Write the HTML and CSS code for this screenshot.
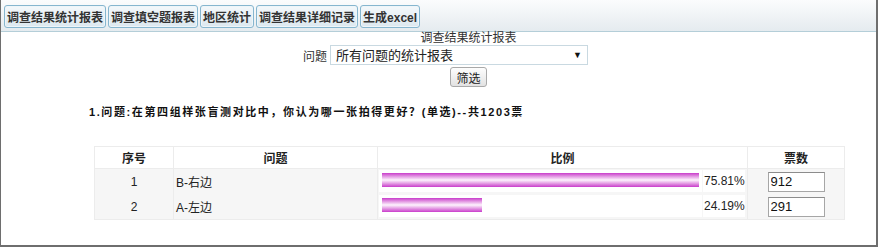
FILE: index.html
```html
<!DOCTYPE html>
<html lang="zh">
<head>
	<meta charset="UTF-8">
	<title>调查结果统计报表</title>
	<link rel="stylesheet" href="styles.css">
</head>
<body>
	<div id="page">
		<!-- Tabs -->
		<div id="tabbar">
			<button class="tab">调查结果统计报表</button>
			<button class="tab">调查填空题报表</button>
			<button class="tab">地区统计</button>
			<button class="tab">调查结果详细记录</button>
			<button class="tab">生成excel</button>
		</div>

		<!-- Filter -->
		<div id="filter">
			<div class="title">调查结果统计报表</div>
			<div class="row">
				<span class="label">问题</span>
				<span class="selectWrap">
					<select name="question">
						<option>所有问题的统计报表</option>
					</select>
				</span>
			</div>
			<button class="btn">筛选</button>
		</div>

		<!-- Result -->
		<p class="question">1.问题:在第四组样张盲测对比中，你认为哪一张拍得更好？(单选)--共1203票</p>

		<table id="result">
			<tr>
				<th class="colNo">序号</th>
				<th class="colName">问题</th>
				<th class="colRate">比例</th>
				<th class="colCount">票数</th>
			</tr>
			<tr>
				<td class="center">1</td>
				<td>B-右边</td>
				<td class="rateCell">
					<div class="rate">
						<div class="barBox"><div class="bar" style="width: 317px"></div></div>
						<div class="pct">75.81%</div>
					</div>
				</td>
				<td class="center"><input type="text" value="912"></td>
			</tr>
			<tr>
				<td class="center">2</td>
				<td>A-左边</td>
				<td class="rateCell">
					<div class="rate">
						<div class="barBox"><div class="bar" style="width: 100px"></div></div>
						<div class="pct">24.19%</div>
					</div>
				</td>
				<td class="center"><input type="text" value="291"></td>
			</tr>
		</table>
	</div>
</body>
</html>
```

FILE: styles.css
```css
body {
	margin: 0;
	background: #fff;
	font-family: "Liberation Sans", "Noto Sans CJK SC", sans-serif;
	font-size: 12px;
	color: #222;
}

#page {
	box-sizing: border-box;
	width: 878px;
	height: 247px;
	border: solid 2px #6e6e6e;
	border-top: none;
	border-left-width: 1px;
}

/* 上のタブ */
#tabbar {
	display: flex;
	gap: 2px;
	height: 32px;
	box-sizing: border-box;
	padding: 5px 0 0 3px;
	background: linear-gradient(#fbfcfd, #e5ebef);
	border-bottom: solid 1px #b4ced8;
}
button.tab {
	height: 23px;
	padding: 0 2px;
	font-family: "Liberation Sans", "Noto Sans CJK SC", sans-serif;
	font-size: 12px;
	font-weight: bold;
	color: #333;
	background: linear-gradient(#f4f8fb, #dce8ef);
	border: solid 1px #86b6cf;
	border-radius: 3px;
	box-shadow: inset 0 0 0 1px #eef5f9;
}

#filter {
	display: flex;
	flex-direction: column;
	align-items: center;
}
#filter .title {
	margin: 0 0 0 60px;
	line-height: 13px;
	color: #333;
}
#filter .row {
	display: flex;
	align-items: center;
	margin: 0 0 0 14px;
	gap: 3px;
}
#filter .label {
	color: #333;
}
.selectWrap {
	position: relative;
	display: block;
}
.selectWrap::after {
	content: "▼";
	position: absolute;
	right: 6px;
	top: 5px;
	font-size: 9px;
	color: #111;
	pointer-events: none;
}
select {
	-webkit-appearance: none;
	appearance: none;
	width: 258px;
	height: 20px;
	margin: 0;
	padding: 0 5px;
	font-family: "Liberation Sans", "Noto Sans CJK SC", sans-serif;
	font-size: 13px;
	color: #222;
	background: #fff;
	border: solid 1px #c9d9e1;
	border-radius: 0;
}
button.btn {
	margin: 2px 0 0 60px;
	width: 37px;
	height: 20px;
	padding: 0;
	font-family: "Liberation Sans", "Noto Sans CJK SC", sans-serif;
	font-size: 12px;
	color: #222;
	background: linear-gradient(#fdfdfd, #e2e2e2);
	border: solid 1px #a9a9a9;
	border-radius: 3px;
}

p.question {
	margin: 16px 0 0 88px;
	font-size: 11px;
	font-weight: bold;
	letter-spacing: 1.6px;
	color: #111;
}

/* 結果テーブル */
#result {
	margin: 27px 0 0 93px;
	width: 751px;
	border-collapse: collapse;
	border: solid 1px #ececec;
}
#result th {
	height: 21px;
	padding: 0;
	background: #fff;
	border: solid 1px #ececec;
	font-size: 12px;
	font-weight: bold;
	color: #222;
}
#result td {
	height: 25px;
	padding: 0 0 0 2px;
	background: #f6f6f6;
	border-left: solid 1px #ececec;
	font-size: 12px;
	color: #222;
}
#result td.center {
	text-align: center;
	padding: 0;
}
th.colNo { width: 78px; }
th.colName { width: 203px; }
th.colRate { width: 369px; }

td.rateCell {
	padding: 0 !important;
	vertical-align: top;
}
.rate {
	display: flex;
	gap: 1px;
	padding: 1px 2px 0 1px;
}
.barBox {
	flex: 1;
	height: 22px;
	padding: 3px 0 0 3px;
	box-sizing: border-box;
	background: #fff;
}
.bar {
	height: 14px;
	background: linear-gradient(#c93ccb, #e08fe0 22%, #fdf3fd 50%, #e08fe0 78%, #c93ccb);
}
.pct {
	width: 41px;
	height: 22px;
	line-height: 22px;
	padding-left: 1px;
	background: #fff;
	font-size: 12px;
	color: #222;
}
#result input {
	box-sizing: border-box;
	width: 57px;
	height: 20px;
	margin: 0;
	padding: 0 2px;
	font-family: "Liberation Sans", sans-serif;
	font-size: 13px;
	color: #111;
	border: solid 1px #a6a6a6;
	border-top-color: #8c8c8c;
}
```
